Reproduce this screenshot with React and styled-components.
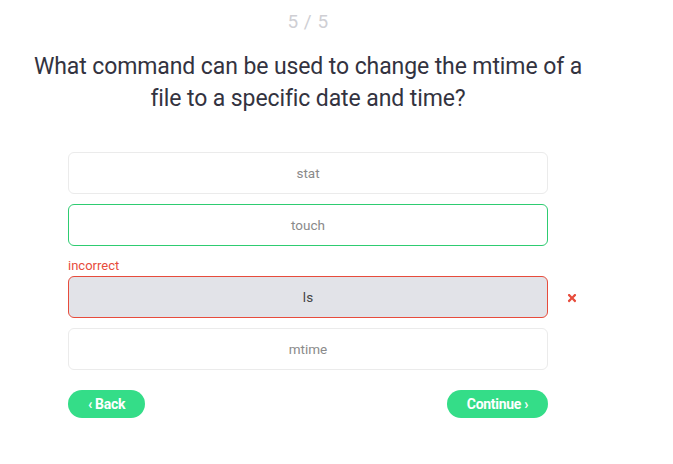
import React from "react";
import styled, { createGlobalStyle } from "styled-components";
import { FaTimes } from "react-icons/fa";

const GlobalStyle = createGlobalStyle`
  body {
    margin: 8px;
    background: #fff;
    font-family: Roboto, "Liberation Sans", sans-serif;
  }
`

const Quiz = styled.div`
  width: 600px;
  display: flex;
  flex-direction: column;
  align-items: center;
`

const Counter = styled.div`
  margin-top: 2px;
  font-size: 19px;
  color: #cfcfd4;
  letter-spacing: 0.5px;
`

const Question = styled.h2`
  margin: 18px 0 0;
  font-size: 23px;
  font-weight: 400;
  line-height: 32px;
  color: #33333f;
  text-align: center;
  letter-spacing: -0.1px;
`

const Answers = styled.div`
  width: 480px;
  margin-top: 37px;
  display: flex;
  flex-direction: column;
`

const Label = styled.div`
  margin-top: 12px;
  height: 18px;
  font-size: 13px;
  color: #e74c3c;
`

const Row = styled.div`
  position: relative;
  margin-top: ${(p) => (p.$first || p.$labelled ? "0" : "10px")};
`

const Option = styled.div`
  box-sizing: border-box;
  height: 42px;
  display: flex;
  align-items: center;
  justify-content: center;
  border-radius: 6px;
  font-size: 13.5px;
  border: 1px solid
    ${(p) => (p.$state === "correct" ? "#2ecc71" : p.$state === "wrong" ? "#e74c3c" : "#ebebeb")};
  background: ${(p) => (p.$state === "wrong" ? "#e2e3e8" : "#fff")};
  color: ${(p) => (p.$state === "wrong" ? "#444" : "#8a8a8a")};
`

const Mark = styled.span`
  position: absolute;
  right: -30px;
  top: 16px;
  color: #e74c3c;
  font-size: 12px;
  line-height: 0;
`

const Nav = styled.div`
  width: 480px;
  margin-top: 20px;
  display: flex;
  justify-content: space-between;
`

const NavButton = styled.button`
  height: 28px;
  width: ${(p) => p.$w}px;
  border: none;
  border-radius: 14px;
  background: #34dd88;
  color: #fff;
  font-family: Roboto, "Liberation Sans", sans-serif;
  font-weight: 700;
  font-size: 14px;
  letter-spacing: -0.3px;
  padding: 0;
  cursor: pointer;
`

const options = [
  { text: "stat" },
  { text: "touch", state: "correct" },
  { text: "ls", state: "wrong" },
  { text: "mtime" },
];

const App = () => {
  return (
    <>
      <GlobalStyle />
      <Quiz>
        <Counter>5 / 5</Counter>
        <Question>
          What command can be used to change the mtime of a
          <br />
          file to a specific date and time?
        </Question>
        <Answers>
          {options.map((o, i) => (
            <React.Fragment key={i}>
              {o.state === "wrong" && <Label>incorrect</Label>}
              <Row $first={i === 0} $labelled={o.state === "wrong"}>
                <Option $state={o.state}>{o.text}</Option>
                {o.state === "wrong" && (
                  <Mark>
                    <FaTimes />
                  </Mark>
                )}
              </Row>
            </React.Fragment>
          ))}
        </Answers>
        <Nav>
          <NavButton $w={77}>‹ Back</NavButton>
          <NavButton $w={101}>Continue ›</NavButton>
        </Nav>
      </Quiz>
    </>
  );
};

export default App;
